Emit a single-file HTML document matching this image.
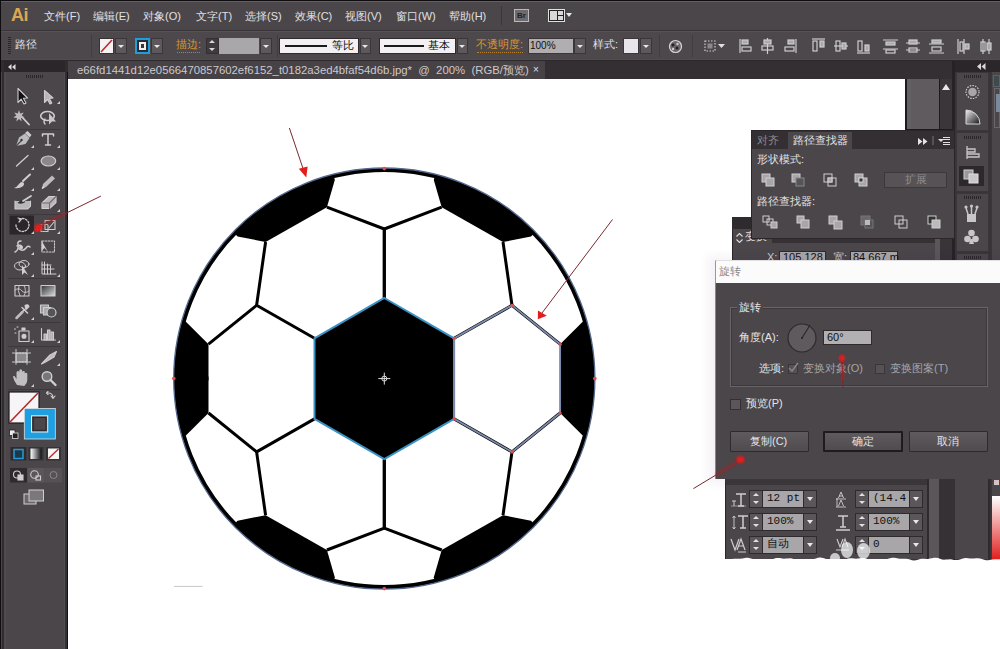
<!DOCTYPE html>
<html><head><meta charset="utf-8">
<style>
*{margin:0;padding:0;box-sizing:border-box}
html,body{width:1000px;height:649px;overflow:hidden;background:#2c282c;font-family:"Liberation Sans",sans-serif;font-size:12px;color:#dcdadc}
.a{position:absolute}
.t{position:absolute;white-space:nowrap;line-height:1}
</style></head><body>
<!-- menu bar -->
<div class="a" style="left:0;top:0;width:1000px;height:649px;background:#100d11"></div>
<div class="a" style="left:1px;top:1px;width:999px;height:1px;background:#635f63"></div>
<div class="a" style="left:1px;top:2px;width:999px;height:28px;background:#4a464a"></div>
<div class="a" style="left:1px;top:30px;width:999px;height:1px;background:#383438"></div>
<!-- control bar -->
<div class="a" style="left:1px;top:31px;width:999px;height:1px;background:#565256"></div>
<div class="a" style="left:1px;top:32px;width:999px;height:27px;background:#4c484c"></div>
<div class="a" style="left:1px;top:59px;width:999px;height:1px;background:#514d51"></div>
<div class="a" style="left:1px;top:60px;width:999px;height:1px;background:#2c282c"></div>
<!-- tab bar -->
<div class="a" style="left:1px;top:61px;width:999px;height:18px;background:#332f33"></div>
<!-- left toolbar -->
<div class="a" style="left:1px;top:61px;width:67px;height:588px;background:#302c30"></div>
<div class="a" style="left:1px;top:72px;width:1px;height:577px;background:#4a474a"></div>
<div class="a" style="left:4px;top:61px;width:61px;height:11px;background:#2a262a"></div>
<div class="a" style="left:4px;top:72px;width:61px;height:577px;background:#4a464a;border-left:2px solid #4f4b4f;border-right:1px solid #504c50"></div>
<div class="a" style="left:65px;top:72px;width:2px;height:577px;background:#333033"></div>
<div class="a" style="left:67px;top:72px;width:1px;height:577px;background:#151215"></div>
<!-- canvas -->
<div class="a" style="left:68px;top:79px;width:837px;height:570px;background:#fff"></div>
<!-- doc tab -->
<div class="a" style="left:68px;top:61px;width:477px;height:18px;background:#464246"></div>

<!-- MENU TEXT -->
<div class="t" style="left:11px;top:6px;font-size:18px;font-weight:bold;color:#dca752;letter-spacing:-0.5px">Ai</div>
<div class="t" style="left:44px;top:11px;font-size:11px;color:#e2e0e2">文件(F)</div>
<div class="t" style="left:93px;top:11px;font-size:11px;color:#e2e0e2">编辑(E)</div>
<div class="t" style="left:143px;top:11px;font-size:11px;color:#e2e0e2">对象(O)</div>
<div class="t" style="left:196px;top:11px;font-size:11px;color:#e2e0e2">文字(T)</div>
<div class="t" style="left:245px;top:11px;font-size:11px;color:#e2e0e2">选择(S)</div>
<div class="t" style="left:295px;top:11px;font-size:11px;color:#e2e0e2">效果(C)</div>
<div class="t" style="left:345px;top:11px;font-size:11px;color:#e2e0e2">视图(V)</div>
<div class="t" style="left:396px;top:11px;font-size:11px;color:#e2e0e2">窗口(W)</div>
<div class="t" style="left:449px;top:11px;font-size:11px;color:#e2e0e2">帮助(H)</div>
<div class="a" style="left:501px;top:6px;width:1px;height:19px;background:#3a363a"></div>
<div class="a" style="left:514px;top:9px;width:15px;height:13px;background:#6e6a6e;border:1px solid #bcb8bc"></div>
<div class="t" style="left:517px;top:12px;font-size:8px;font-weight:bold;color:#222">Br</div>
<div class="a" style="left:548px;top:9px;width:17px;height:13px;border:1px solid #e0e0e0;background:#222"></div>
<div class="a" style="left:550px;top:11px;width:7px;height:9px;background:#d8d8d8"></div>
<div class="a" style="left:558px;top:11px;width:5px;height:4px;background:#d8d8d8"></div>
<div class="a" style="left:558px;top:16px;width:5px;height:4px;background:#d8d8d8"></div>
<div class="a" style="left:566px;top:13px;width:0;height:0;border-left:3.5px solid transparent;border-right:3.5px solid transparent;border-top:4.5px solid #e8e8e8"></div>

<!-- CONTROL BAR -->
<div class="a" style="left:8px;top:37px;width:3px;height:18px;background:repeating-linear-gradient(#2a262a 0 1px,#4c484c 1px 2px)"></div>
<div class="t" style="left:15px;top:39px;font-size:11px;color:#e2e0e2">路径</div>
<div class="a" style="left:91px;top:35px;width:1px;height:22px;background:#403c40"></div>
<div class="a" style="left:99px;top:38px;width:15px;height:16px;background:#f4f2f4;border:1px solid #353135"></div>
<svg class="a" style="left:99px;top:38px" width="15" height="16"><line x1="2" y1="14" x2="13" y2="2" stroke="#c02828" stroke-width="1.6"/></svg>
<div class="a" style="left:115px;top:38px;width:12px;height:16px;background:#5c585c;border:1px solid #3a363a"></div>
<div class="a" style="left:118px;top:45px;width:0;height:0;border-left:3px solid transparent;border-right:3px solid transparent;border-top:3.5px solid #e8e8e8"></div>
<div class="a" style="left:135px;top:38px;width:15px;height:16px;background:#1e9fdc"></div>
<div class="a" style="left:137px;top:40px;width:11px;height:12px;background:#2e2a2e"></div>
<div class="a" style="left:139px;top:42px;width:7px;height:8px;background:#f0f0f0"></div>
<div class="a" style="left:141px;top:44px;width:3px;height:4px;background:#3a363a"></div>
<div class="a" style="left:151px;top:38px;width:12px;height:16px;background:#5c585c;border:1px solid #3a363a"></div>
<div class="a" style="left:154px;top:45px;width:0;height:0;border-left:3px solid transparent;border-right:3px solid transparent;border-top:3.5px solid #e8e8e8"></div>
<div class="t" style="left:176px;top:39px;font-size:11px;color:#d8972f">描边:</div>
<div class="a" style="left:177px;top:52px;width:23px;height:1px;border-top:1px dotted #b8802a"></div>
<div class="a" style="left:206px;top:38px;width:13px;height:16px;background:#3e3a3e;border:1px solid #332f33"></div>
<div class="a" style="left:209px;top:40px;width:0;height:0;border-left:3px solid transparent;border-right:3px solid transparent;border-bottom:3.5px solid #d8d8d8"></div>
<div class="a" style="left:209px;top:48px;width:0;height:0;border-left:3px solid transparent;border-right:3px solid transparent;border-top:3.5px solid #d8d8d8"></div>
<div class="a" style="left:219px;top:38px;width:40px;height:16px;background:#a9a7a9"></div>
<div class="a" style="left:260px;top:38px;width:12px;height:16px;background:#5c585c;border:1px solid #3a363a"></div>
<div class="a" style="left:263px;top:45px;width:0;height:0;border-left:3px solid transparent;border-right:3px solid transparent;border-top:3.5px solid #e8e8e8"></div>
<div class="a" style="left:277px;top:35px;width:1px;height:22px;background:#403c40"></div>
<div class="a" style="left:279px;top:38px;width:80px;height:16px;background:#f2f0f2;border:1px solid #2e2a2e"></div>
<div class="a" style="left:285px;top:45px;width:42px;height:2px;background:#1a1a1a"></div>
<div class="t" style="left:332px;top:40px;font-size:11px;color:#111">等比</div>
<div class="a" style="left:360px;top:38px;width:11px;height:16px;background:#5c585c;border:1px solid #3a363a"></div>
<div class="a" style="left:362px;top:45px;width:0;height:0;border-left:3px solid transparent;border-right:3px solid transparent;border-top:3.5px solid #e8e8e8"></div>
<div class="a" style="left:379px;top:38px;width:77px;height:16px;background:#f2f0f2;border:1px solid #2e2a2e"></div>
<div class="a" style="left:384px;top:45px;width:40px;height:2px;background:#1a1a1a"></div>
<div class="t" style="left:428px;top:40px;font-size:11px;color:#111">基本</div>
<div class="a" style="left:457px;top:38px;width:11px;height:16px;background:#5c585c;border:1px solid #3a363a"></div>
<div class="a" style="left:459px;top:45px;width:0;height:0;border-left:3px solid transparent;border-right:3px solid transparent;border-top:3.5px solid #e8e8e8"></div>
<div class="t" style="left:476px;top:39px;font-size:11px;color:#d8972f">不透明度:</div>
<div class="a" style="left:477px;top:52px;width:46px;height:1px;border-top:1px dotted #b8802a"></div>
<div class="a" style="left:528px;top:38px;width:46px;height:16px;background:#b0aeb0;border:1px solid #3a363a"></div>
<div class="t" style="left:530px;top:41px;font-size:10px;color:#111">100%</div>
<div class="a" style="left:574px;top:38px;width:12px;height:16px;background:#5c585c;border:1px solid #3a363a"></div>
<div class="a" style="left:577px;top:45px;width:0;height:0;border-left:3px solid transparent;border-right:3px solid transparent;border-top:3.5px solid #e8e8e8"></div>
<div class="t" style="left:593px;top:39px;font-size:11px;color:#e2e0e2">样式:</div>
<div class="a" style="left:623px;top:38px;width:16px;height:16px;background:#e9e5ec;border:1px solid #3a363a"></div>
<div class="a" style="left:640px;top:38px;width:12px;height:16px;background:#5c585c;border:1px solid #3a363a"></div>
<div class="a" style="left:643px;top:45px;width:0;height:0;border-left:3px solid transparent;border-right:3px solid transparent;border-top:3.5px solid #e8e8e8"></div>
<div class="a" style="left:659px;top:35px;width:1px;height:22px;background:#403c40"></div>
<svg class="a" style="left:668px;top:39px" width="15" height="15"><circle cx="7.5" cy="7.5" r="6" fill="#6a666a" stroke="#d8d8d8" stroke-width="1.2"/><circle cx="5" cy="6" r="1.5" fill="#222"/><circle cx="9" cy="9" r="1.5" fill="#222"/><circle cx="9.5" cy="5" r="1.2" fill="#ccc"/><circle cx="5" cy="10" r="1.2" fill="#ccc"/></svg>
<div class="a" style="left:692px;top:35px;width:1px;height:22px;background:#403c40"></div>
<svg class="a" style="left:700px;top:36px" width="300" height="22" fill="none" stroke="#cfcdcf" stroke-width="1.2">
<rect x="5" y="5" width="10" height="10" stroke-dasharray="1.5 1.5"/><rect x="7.5" y="7.5" width="5" height="5" fill="#8a888a" stroke="none"/>
<path d="M18,8 h7 l-3.5,4z" fill="#e0e0e0" stroke="none"/>
<path d="M40,3 v14"/><rect x="42" y="4" width="6" height="4" fill="#aaa"/><rect x="42" y="11" width="9" height="4"/>
<path d="M67.5,2 v16"/><rect x="64" y="4" width="7" height="4" fill="#aaa"/><rect x="62" y="10" width="11" height="4"/>
<path d="M96,3 v14"/><rect x="88" y="4" width="6" height="4" fill="#aaa"/><rect x="85" y="11" width="9" height="4"/>
<path d="M112,3 h13"/><rect x="113" y="5" width="4" height="10"/><rect x="120" y="5" width="4" height="6" fill="#aaa"/>
<path d="M134,10 h14"/><rect x="136" y="5" width="4" height="10"/><rect x="142" y="7" width="4" height="6" fill="#aaa"/>
<path d="M157,17 h13"/><rect x="158" y="5" width="4" height="10"/><rect x="165" y="9" width="4" height="6" fill="#aaa"/>
<path d="M183,4 h15 M183,13 h15"/><rect x="186" y="6" width="9" height="3" fill="#aaa"/><rect x="186" y="14" width="9" height="3"/>
<path d="M206,7 h14 M206,14 h14"/><rect x="209" y="4" width="8" height="4" fill="#aaa"/><rect x="209" y="12" width="8" height="4"/>
<path d="M229,8 h15 M229,17 h15"/><rect x="232" y="4" width="9" height="3" fill="#aaa"/><rect x="232" y="11" width="9" height="4"/>
<path d="M258,3 v15 M264,3 v15"/><rect x="260" y="6" width="3" height="9"/><rect x="265" y="8" width="4" height="5" fill="#aaa"/>
<path d="M283,3 v15 M289,3 v15"/><rect x="281" y="6" width="4" height="9"/><rect x="287" y="7" width="4" height="7" fill="#aaa"/>
</svg>


<!-- TOOLBAR -->
<svg class="a" style="left:0;top:0" width="70" height="649" viewBox="0 0 70 649">
<g fill="#3c383c"><rect x="8" y="129" width="53" height="1"/><rect x="8" y="214" width="53" height="1"/><rect x="8" y="278" width="53" height="1"/><rect x="8" y="322" width="53" height="1"/><rect x="8" y="346" width="53" height="1"/><rect x="8" y="389" width="53" height="1"/></g>
<rect x="9.5" y="215.5" width="24.5" height="19" fill="#2a262a"/>
<!-- flyout triangles -->
<g fill="#d0ced0">
<path d="M60,101 v3 h-3z"/><path d="M34,145 v3 h-3z"/><path d="M60,145 v3 h-3z"/><path d="M34,167 v3 h-3z"/><path d="M60,167 v3 h-3z"/>
<path d="M34,188 v3 h-3z"/><path d="M60,188 v3 h-3z"/><path d="M60,209 v3 h-3z"/><path d="M34,231 v3 h-3z"/><path d="M60,231 v3 h-3z"/>
<path d="M34,252 v3 h-3z"/><path d="M34,274 v3 h-3z"/><path d="M60,274 v3 h-3z"/><path d="M34,317 v3 h-3z"/><path d="M34,340 v3 h-3z"/><path d="M60,340 v3 h-3z"/>
<path d="M60,363 v3 h-3z"/><path d="M34,384 v3 h-3z"/>
</g>
<g stroke="#cfcdcf" fill="none" stroke-width="1.1" stroke-linejoin="round" stroke-linecap="round">
<!-- selection -->
<path d="M18,88.5 L18,102.5 L21.2,99.2 L24,104 L26,103 L23.4,98.3 L27.5,98 Z" fill="#111"/>
<path d="M44.5,90.5 L44.5,102.5 L47.5,99.5 L50,104 L51.8,103 L49.3,98.5 L53,98 Z" fill="#b8b6b8"/>
<!-- magic wand -->
<path d="M21,116 L29,124.5" stroke-width="1.8"/>
<path d="M19,110 l1.2,3.5 3.5,-1 -2,3 3,2 -3.6,0.5 0.5,3.6 -2.6,-2.6 -2.6,2.6 0.5,-3.6 -3.6,-0.5 3,-2 -2,-3 3.5,1z" fill="#bdbbbd" stroke="none"/>
<!-- lasso -->
<ellipse cx="47.5" cy="116" rx="6.8" ry="4.5" stroke-width="1.6"/><path d="M45,119 q-2,3 0,5" stroke-width="1.4"/>
<path d="M49,113 L49,124.5 L52,121.5 L56,121.5 Z" fill="#c8c6c8" stroke="none"/>
<!-- pen -->
<path d="M16,146 L19,137.5 L25,133.5 L29.5,138 L25.5,144 Z" fill="#bdbbbd" stroke="none"/>
<path d="M25,133 L27.5,131 L31.5,135 L29.5,137.5Z" fill="#cfcdcf" stroke="none"/>
<circle cx="21.5" cy="140" r="1.2" fill="#333" stroke="none"/><path d="M16,146 L21,141" stroke="#444"/>
<!-- type -->
<path d="M42.5,134 H53.5 V136 M42.5,134 V136 M48,134 V145 M45.5,145 H50.5" stroke-width="1.5"/>
<!-- line -->
<path d="M16.5,166 L28,155.5" stroke-width="1.3"/>
<!-- ellipse -->
<ellipse cx="48.4" cy="161" rx="7.3" ry="5" fill="#8a888a" stroke-width="1.2"/>
<!-- brush -->
<path d="M23,181 L30,174.5" stroke-width="2"/>
<path d="M14,188 q3,-1 5,-4 q2,-3 4.5,-1.5 q1.5,2 -1,4 q-3,2.5 -8.5,1.5z" fill="#cfcdcf" stroke="none"/>
<!-- pencil -->
<path d="M42,188.5 L43,184 L52,175.5 L55,178.5 L46,187 Z" fill="#bdbbbd" stroke="none"/><path d="M41.5,189.3 l1.5,-3 1.5,1.5z" fill="#eee" stroke="none"/>
<!-- blob brush -->
<path d="M15,201 v8 h12.5 l3,-3 v-5" fill="#b8b6b8" stroke="#cfcdcf"/><path d="M17.5,203 q4,-5 8,-1 q-4,3 -8,1z" fill="#333" stroke="none"/><path d="M23,201 L31,196" stroke-width="1.8"/>
<!-- eraser -->
<path d="M42,203 L49,196.5 L56,196.5 L56,202.5 L49.5,208.5 L42,208.5 Z" fill="#b8b6b8" stroke="#d2d0d2"/><path d="M42,203 H49.5 L56,196.5 M49.5,203 V208.5" stroke="#706c70"/>
<!-- rotate -->
<path d="M16,225 a6.5,6.5 0 1 0 3,-5.5" stroke-dasharray="1.6 1.6" stroke-width="1.3"/><path d="M18,218 l3.5,1 -2.5,3" stroke-width="1.2"/>
<!-- scale -->
<rect x="41" y="224.5" width="7" height="7" stroke-dasharray="1.5 1"/><rect x="45" y="220.5" width="10" height="9"/><path d="M49,228 l5,-6" />
<!-- warp -->
<path d="M15,252 q4,-2 3,-7 q-1,-4 3,-4 M19,249 q4,3 7,-1 q2,-3 4,-1 M17,246 q4,-2 5,1" stroke-width="1.5"/><circle cx="21" cy="247.5" r="1.4" fill="#cfcdcf"/>
<!-- free transform -->
<rect x="42" y="241" width="12.5" height="11" stroke-dasharray="1.6 1.4"/><path d="M41.5,240.5 L41.5,251 L44.5,248 L48,252 Z" fill="#d0ced0" stroke="none"/>
<!-- shape builder -->
<ellipse cx="20" cy="266" rx="5.5" ry="4" stroke-width="1"/><ellipse cx="24" cy="264" rx="5" ry="3.5" stroke-width="1"/><path d="M22,265 L22,275 L24.5,272.5 L28,275 Z" fill="#cfcdcf" stroke="none"/>
<!-- perspective grid -->
<path d="M42,262 V274 H56 M44.5,262 V274 M47.5,264 V274 M50.5,266 V274 M42,265 H51 M42,269 H54" stroke-width="1"/>
<!-- mesh -->
<rect x="15" y="285.5" width="14" height="10.5"/><path d="M15,290 q4,-3 7,1 q3,3 7,0 M19,285.5 q-2,5 1,10.5 M24,285.5 q3,5 0,10.5" stroke-width="0.9"/>
<!-- gradient -->
<defs><linearGradient id="gr" x1="0" x2="1" y1="0" y2="1"><stop offset="0" stop-color="#333"/><stop offset="1" stop-color="#ddd"/></linearGradient>
<linearGradient id="gw" x1="0" x2="1"><stop offset="0" stop-color="#fff"/><stop offset="1" stop-color="#111"/></linearGradient></defs>
<rect x="41" y="285.5" width="14" height="10.5" fill="url(#gr)" stroke="#cfcdcf"/>
<!-- eyedropper -->
<path d="M16.5,318 L24.5,309.5 M22,307.5 L27.5,313" stroke-width="1.5"/><path d="M25,305.5 q3,-2 4,1 l-3,3z" fill="#cfcdcf"/><path d="M16.5,318 L19,315.5 L22.5,312" stroke-width="2.5" stroke="#bdbbbd"/>
<!-- blend -->
<rect x="40.5" y="305" width="8" height="8" fill="#999"/><rect x="43.5" y="307.5" width="7.5" height="7.5" fill="#aaa"/><circle cx="51.5" cy="312.5" r="4.5" fill="#555" stroke-width="1.2"/>
<!-- symbol sprayer -->
<rect x="19" y="331" width="10" height="10.5"/><circle cx="24" cy="336.3" r="2" fill="#cfcdcf"/><rect x="22" y="328" width="3" height="2" fill="#cfcdcf"/><path d="M14.5,329 h2 M15,333 h2 M17,327 h1" stroke-dasharray="1 1"/>
<!-- column graph -->
<path d="M41.5,328.5 V340 H55.5" /><rect x="44" y="334" width="2.5" height="6" fill="#aaa"/><rect x="47.5" y="330" width="2.5" height="10" fill="#aaa"/><rect x="51" y="332" width="2.5" height="8" fill="#aaa"/>
<!-- artboard -->
<rect x="16" y="353" width="11" height="9" fill="#8a888a"/><path d="M12.5,353 H31 M12.5,362 H31 M16,349.5 V365.5 M27,349.5 V365.5" stroke-width="1" stroke-dasharray="2 1.2"/>
<!-- slice -->
<path d="M41.5,364 L50,355 L56.5,351.5 L54,357 L45.5,362 Z" fill="#bdbbbd"/>
<!-- hand -->
<path d="M17,385 q-3,-4 -4,-8 q0,-1.5 1.5,-1 l2,3 v-6.5 q0,-1.5 1.5,-1.5 q1.3,0 1.3,1.5 v-1.8 q0,-1.5 1.4,-1.5 q1.4,0 1.4,1.5 v1.5 q0,-1.3 1.4,-1.3 q1.3,0 1.3,1.3 v1.5 q0,-1 1.2,-1 q1.3,0 1.3,1.3 v6 q0,3.5 -3,6 z" fill="#c0bec0" stroke="none"/>
<!-- zoom -->
<circle cx="47" cy="376.5" r="4.8" stroke-width="1.4" fill="#777"/><path d="M50.5,380 L55.5,385" stroke-width="2.4"/>
<!-- swap -->
<path d="M48,393 q5,0 5,5 M51,396 l2,2.5 2,-2.5 M48,391.5 l-1.5,1.5 1.5,1.5" stroke-width="1.1"/>
</g>
<!-- fill/stroke swatches -->
<rect x="9" y="392" width="30" height="31" fill="#f6f4f6" stroke="#1e1c1e" stroke-width="1.2"/>
<path d="M10,422 L38,393" stroke="#b02a2a" stroke-width="1.6"/>
<rect x="24.3" y="408.5" width="31" height="30.5" fill="#1d9fe1" stroke="#e0e0e0" stroke-width="0.8"/>
<rect x="31.5" y="415.8" width="16.2" height="16.2" fill="#4a464a" stroke="#f0f0f0" stroke-width="1"/>
<rect x="33.2" y="417.5" width="12.8" height="12.8" fill="#4a464a" stroke="#2a262a" stroke-width="1"/>
<rect x="9.5" y="430" width="5.5" height="5.5" fill="#f0f0f0" stroke="#222" stroke-width="0.8"/><rect x="12.5" y="433" width="5.5" height="5.5" fill="#222" stroke="#ddd" stroke-width="0.8"/>
<!-- color modes -->
<rect x="10.5" y="447" width="16" height="13.5" fill="#2e2a2e"/>
<rect x="14" y="449.5" width="9" height="9" fill="#1a3a4a" stroke="#2a9ad6" stroke-width="1.5"/>
<rect x="28.5" y="447" width="15" height="13.5" fill="#333"/><rect x="30.5" y="448.5" width="11" height="10.5" fill="url(#gw)"/>
<rect x="46" y="447" width="15" height="13.5" fill="#333"/><rect x="48" y="448.5" width="11" height="10.5" fill="#f4f4f4"/><path d="M48.5,458.5 L58.5,449" stroke="#b02a2a" stroke-width="1.3"/>
<!-- draw modes -->
<rect x="10" y="468" width="17" height="14.5" fill="#2e2a2e"/>
<rect x="27.5" y="468" width="17" height="14.5" fill="#5a565a"/>
<rect x="45" y="468" width="17" height="14.5" fill="#555155"/>
<g fill="none" stroke="#d0ced0" stroke-width="1.1"><circle cx="17" cy="474.5" r="3.5"/><rect x="18" y="475" width="5" height="5" fill="#d0ced0"/>
<circle cx="34.5" cy="474.5" r="3.8"/><rect x="36" y="476" width="4.5" height="4" /></g>
<circle cx="53.5" cy="475" r="3.5" fill="none" stroke="#888" stroke-width="1"/>
<!-- screen mode -->
<rect x="24" y="494" width="12" height="10" fill="#6a666a" stroke="#d0ced0" stroke-width="1"/>
<rect x="29" y="490" width="14.5" height="11" fill="#7a787a" stroke="#d0ced0" stroke-width="1"/>
</svg>


<!-- RIGHT AREA -->
<div class="a" style="left:905px;top:61px;width:95px;height:500px;background:#383438"></div>
<div class="a" style="left:905px;top:61px;width:50px;height:18px;background:#332f33"></div>
<div class="a" style="left:905px;top:79px;width:50px;height:52px;background:#1e1a1e"></div>
<div class="a" style="left:907px;top:79px;width:32px;height:50px;background:#5f5b5f;border-left:4px solid #646064"></div>
<div class="a" style="left:940px;top:79px;width:12px;height:50px;background:#3a363a"></div>
<div class="a" style="left:952px;top:61px;width:3px;height:500px;background:#262226"></div>
<div class="a" style="left:942px;top:84px;width:0;height:0;border-left:4.5px solid transparent;border-right:4.5px solid transparent;border-bottom:6px solid #e8e8e8"></div>
<!-- dock -->
<div class="a" style="left:955px;top:61px;width:35px;height:11px;background:#2a262a"></div>
<svg class="a" style="left:977px;top:63px" width="9" height="7"><path d="M4,0 L0,3.5 L4,7Z M8.5,0 L4.5,3.5 L8.5,7Z" fill="#d8d8d8"/></svg>
<div class="a" style="left:956px;top:72px;width:33px;height:59px;background:#4a464a;border:1px solid #3a363a"></div>
<div class="a" style="left:964px;top:75px;width:17px;height:3px;background:repeating-linear-gradient(90deg,#2a262a 0 1px,#4a464a 1px 2px)"></div>
<svg class="a" style="left:955px;top:72px" width="35" height="490" viewBox="955 72 35 490">
<circle cx="972.5" cy="92" r="6.5" fill="none" stroke="#d0ced0" stroke-width="1.2" stroke-dasharray="1.5 1.2"/><circle cx="972.5" cy="92" r="4.3" fill="#a8a6a8"/>
<defs><linearGradient id="qg" x1="0" y1="0" x2="1" y2="1"><stop offset="0" stop-color="#f0f0f0"/><stop offset="1" stop-color="#111"/></linearGradient></defs>
<path d="M966,124 V110 A14,14 0 0 1 980,124 Z" fill="url(#qg)" stroke="#d8d6d8" stroke-width="1"/>
</svg>
<div class="a" style="left:956px;top:132px;width:33px;height:60px;background:#4a464a;border:1px solid #3a363a"></div>
<div class="a" style="left:964px;top:136px;width:17px;height:3px;background:repeating-linear-gradient(90deg,#2a262a 0 1px,#4a464a 1px 2px)"></div>
<div class="a" style="left:959px;top:166px;width:25px;height:20px;background:#2c282c"></div>
<div class="a" style="left:956px;top:193px;width:33px;height:59px;background:#4a464a;border:1px solid #3a363a"></div>
<div class="a" style="left:964px;top:196px;width:17px;height:3px;background:repeating-linear-gradient(90deg,#2a262a 0 1px,#4a464a 1px 2px)"></div>
<div class="a" style="left:956px;top:253px;width:33px;height:306px;background:#4a464a;border:1px solid #3a363a"></div>
<div class="a" style="left:964px;top:256px;width:17px;height:3px;background:repeating-linear-gradient(90deg,#2a262a 0 1px,#4a464a 1px 2px)"></div>
<svg class="a" style="left:955px;top:132px" width="35" height="130" viewBox="955 132 35 130" fill="#c8c6c8">
<path d="M967,146 V159 M967,149 H975 V152 H967 M967,154 H979 V157 H967" fill="none" stroke="#c8c6c8" stroke-width="1.3"/>
<rect x="964" y="170" width="9" height="9" fill="#9a989a" stroke="#d0ced0"/><rect x="969" y="174" width="9" height="9" fill="#c8c6c8" stroke="#e0e0e0"/>
<rect x="967" y="214" width="9" height="8"/><path d="M968,214 l-2,-6 M971.5,214 v-7 M975,214 l2,-6" stroke="#c8c6c8" stroke-width="1.5"/><circle cx="966" cy="207" r="1.6"/><circle cx="977" cy="207" r="1.6"/><circle cx="971.5" cy="206" r="1.6"/>
<circle cx="971.5" cy="233" r="3.3"/><circle cx="967.5" cy="239" r="3.3"/><circle cx="975.5" cy="239" r="3.3"/><path d="M970.5,239 L969,244 H974 L972.5,239Z"/>
</svg>
<!-- far right column -->
<div class="a" style="left:990px;top:61px;width:10px;height:11px;background:#2a262a"></div>
<div class="a" style="left:991px;top:72px;width:9px;height:487px;background:#4a464a;border-left:1px solid #3a363a"></div>
<div class="a" style="left:993px;top:75px;width:7px;height:12px;background:#3e4a4e;border:1px solid #5a6266"></div>
<div class="a" style="left:994px;top:88px;width:6px;height:40px;border:1px solid #6a666a;background:#4a464a"></div><div class="a" style="left:996px;top:94px;width:4px;height:18px;background:#7a8a9a"></div>
<div class="a" style="left:992px;top:496px;width:8px;height:63px;background:linear-gradient(#fff,#e02020)"></div>
<div class="a" style="left:993px;top:479px;width:7px;height:7px;background:#d8c8c8;border:1px solid #b02020"></div>

<!-- TRANSFORM PANEL -->
<div class="a" style="left:732px;top:217px;width:208px;height:45px;background:#4a464a;border-left:1px solid #2a262a"></div>
<div class="a" style="left:732px;top:217px;width:208px;height:12px;background:#2e2a2e"></div>
<div class="a" style="left:772px;top:238px;width:163px;height:5px;background:#353135"></div>
<div class="a" style="left:935px;top:229px;width:5px;height:33px;background:#5a565a"></div>
<svg class="a" style="left:736px;top:233px" width="7" height="10"><path d="M0.5,3.5 L3.5,0.5 L6.5,3.5 M0.5,6.5 L3.5,9.5 L6.5,6.5" fill="none" stroke="#e0dee0" stroke-width="1.1"/></svg><div class="t" style="left:745px;top:231px;font-size:11px;color:#e0dee0">变换</div>
<div class="t" style="left:767px;top:252px;font-size:11px;color:#d0ced0">X:</div>
<div class="a" style="left:779px;top:251px;width:47px;height:12px;background:#a8a6a8;border:1px solid #2e2a2e"></div>
<div class="t" style="left:783px;top:252px;font-size:11px;color:#111">105.128</div>
<div class="t" style="left:833px;top:252px;font-size:11px;color:#d0ced0">宽:</div>
<div class="a" style="left:850px;top:251px;width:48px;height:12px;background:#a8a6a8;border:1px solid #2e2a2e"></div>
<div class="t" style="left:853px;top:252px;font-size:11px;color:#111">84.667 m</div>

<!-- PATHFINDER PANEL -->
<div class="a" style="left:751px;top:130px;width:204px;height:109px;background:#4a464a;border:1px solid #2a262a"></div>
<div class="a" style="left:752px;top:131px;width:202px;height:18px;background:#332f33"></div>
<div class="a" style="left:788px;top:132px;width:64px;height:17px;background:#4a464a"></div>
<div class="t" style="left:757px;top:135px;font-size:11px;color:#8e8c8e">对齐</div>
<div class="t" style="left:793px;top:135px;font-size:11px;color:#e2e0e2">路径查找器</div>
<svg class="a" style="left:918px;top:138px" width="10" height="7"><path d="M0,0 L4.5,3.5 L0,7Z M5,0 L9.5,3.5 L5,7Z" fill="#e4e4e4"/></svg>
<div class="a" style="left:932px;top:136px;width:2px;height:9px;background:#555155"></div>
<div class="a" style="left:938px;top:139px;width:0;height:0;border-left:3px solid transparent;border-right:3px solid transparent;border-top:3px solid #e0e0e0"></div>
<div class="a" style="left:943px;top:137px;width:7px;height:8px;background:repeating-linear-gradient(#e0e0e0 0 1px,transparent 1px 2.5px)"></div>
<div class="t" style="left:757px;top:154px;font-size:11px;color:#e2e0e2">形状模式:</div>
<div class="t" style="left:757px;top:196px;font-size:11px;color:#e2e0e2">路径查找器:</div>
<div class="a" style="left:884px;top:172px;width:63px;height:16px;background:#565256;border:1px solid #3c383c"></div>
<div class="t" style="left:905px;top:174px;font-size:11px;color:#8e8c8e">扩展</div>
<svg class="a" style="left:751px;top:165px" width="204" height="70" viewBox="751 165 204 70">
<g stroke="#d0ced0" stroke-width="1" fill="#a8a6a8">
<rect x="762" y="174" width="8" height="8"/><rect x="766" y="178" width="8" height="8"/>
<rect x="792" y="174" width="8" height="8"/><rect x="796" y="178" width="8" height="8" fill="#555" stroke="#888"/>
<rect x="824" y="174" width="8" height="8" fill="none"/><rect x="828" y="178" width="8" height="8" fill="none"/><rect x="828" y="178" width="4" height="4"/>
<rect x="855" y="174" width="8" height="8"/><rect x="859" y="178" width="8" height="8"/><rect x="859" y="178" width="4" height="4" fill="#333"/>
<rect x="763" y="216" width="6" height="6" fill="none"/><rect x="767" y="219" width="6" height="6" fill="none"/><rect x="771" y="222" width="6" height="6"/>
<rect x="797" y="216" width="7" height="7"/><rect x="801" y="220" width="8" height="8"/>
<rect x="829" y="216" width="8" height="8"/><rect x="834" y="221" width="8" height="8"/>
<rect x="861" y="216" width="9" height="9" fill="#6a666a" stroke="#777"/><rect x="865" y="220" width="8" height="8" fill="#555" stroke="#777"/><rect x="865" y="220" width="5" height="5" fill="#bbb" stroke="none"/>
<rect x="895" y="216" width="8" height="8" fill="none"/><rect x="899" y="220" width="8" height="8" fill="none"/>
<rect x="928" y="216" width="8" height="8" fill="#333"/><rect x="932" y="220" width="8" height="8" fill="#bbb"/>
</g></svg>


<!-- ROTATE DIALOG -->
<div class="a" style="left:708px;top:256px;width:292px;height:228px;background:rgba(60,0,60,0.05);filter:blur(4px)"></div>
<div class="a" style="left:715px;top:260px;width:285px;height:219px;background:#4a464a;border-left:1px solid #8a868a"></div>
<div class="a" style="left:715px;top:260px;width:285px;height:23px;background:#fbfbfb;border-left:1px solid #9a989a;border-top:1px solid #e0e0e0"></div>
<div class="t" style="left:719px;top:266px;font-size:11px;color:#8a888a">旋转</div>
<div class="a" style="left:730px;top:307px;width:258px;height:80px;border:1px solid #686468;box-shadow:inset 0 0 0 1px #3c383c"></div>
<div class="a" style="left:737px;top:300px;width:26px;height:14px;background:#4a464a"></div>
<div class="t" style="left:739px;top:302px;font-size:11px;color:#e6e4e6">旋转</div>
<div class="t" style="left:739px;top:332px;font-size:11px;color:#e6e4e6">角度(A):</div>
<svg class="a" style="left:786px;top:322px" width="32" height="32"><circle cx="16" cy="16" r="14" fill="#5e5a5e" stroke="#2e2a2e" stroke-width="1.2"/><line x1="16" y1="16" x2="24" y2="3" stroke="#2a262a" stroke-width="1.1"/><circle cx="16" cy="16" r="1" fill="#222"/></svg>
<div class="a" style="left:823px;top:330px;width:49px;height:15px;background:#b2b0b2;border:1px solid #2e2a2e"></div>
<div class="t" style="left:827px;top:332px;font-size:11px;color:#111">60°</div>
<div class="t" style="left:759px;top:363px;font-size:11px;color:#e6e4e6">选项:</div>
<div class="a" style="left:788px;top:364px;width:10px;height:10px;background:#555155;border:1px solid #3a363a"></div>
<svg class="a" style="left:786px;top:360px" width="14" height="14"><path d="M3,8 L6,11 L12,3" fill="none" stroke="#8a888a" stroke-width="1.4"/></svg>
<div class="t" style="left:803px;top:363px;font-size:11px;color:#a6a4a6">变换对象(O)</div>
<div class="a" style="left:875px;top:364px;width:10px;height:10px;background:#555155;border:1px solid #3a363a"></div>
<div class="t" style="left:890px;top:363px;font-size:11px;color:#a6a4a6">变换图案(T)</div>
<div class="a" style="left:730px;top:399px;width:11px;height:11px;background:#5a565a;border:1px solid #332f33"></div>
<div class="t" style="left:746px;top:398px;font-size:11px;color:#e6e4e6">预览(P)</div>
<div class="a" style="left:730px;top:431px;width:79px;height:21px;background:linear-gradient(#5e5a5e,#4f4b4f);border:1px solid #2e2a2e;border-radius:1px"></div>
<div class="t" style="left:750px;top:436px;font-size:11px;color:#e6e4e6">复制(C)</div>
<div class="a" style="left:823px;top:431px;width:80px;height:21px;background:linear-gradient(#5e5a5e,#4f4b4f);border:2px solid #1e1c1e;border-radius:1px"></div>
<div class="t" style="left:852px;top:436px;font-size:11px;color:#e6e4e6">确定</div>
<div class="a" style="left:909px;top:431px;width:79px;height:21px;background:linear-gradient(#5e5a5e,#4f4b4f);border:1px solid #2e2a2e;border-radius:1px"></div>
<div class="t" style="left:937px;top:436px;font-size:11px;color:#e6e4e6">取消</div>

<!-- CHARACTER PANEL -->
<div class="a" style="left:725px;top:479px;width:203px;height:80px;background:#4a464a;border-left:1px solid #2a262a;border-top:6px solid #3a363a"></div>
<div class="a" style="left:927px;top:479px;width:2px;height:80px;background:#2e2a2e"></div>
<div class="a" style="left:929px;top:479px;width:10px;height:80px;background:#5a565a"></div>
<div class="a" style="left:939px;top:479px;width:16px;height:80px;background:#353135"></div>
<div class="a" style="left:955px;top:479px;width:35px;height:80px;background:#4a464a;border-right:2px solid #2e2a2e"></div>
<div class="a" style="left:749px;top:490px;width:68px;height:18px;background:#2e2a2e"></div>
<div class="a" style="left:750px;top:491px;width:12px;height:16px;background:#5a565a"></div>
<div class="a" style="left:753px;top:493px;width:0;height:0;border-left:3px solid transparent;border-right:3px solid transparent;border-bottom:3.5px solid #e0e0e0"></div>
<div class="a" style="left:753px;top:501px;width:0;height:0;border-left:3px solid transparent;border-right:3px solid transparent;border-top:3.5px solid #e0e0e0"></div>
<div class="a" style="left:763px;top:491px;width:40px;height:16px;background:#a8a6a8"></div>
<div class="t" style="left:767px;top:493px;font-size:11px;color:#111;font-family:'Liberation Mono',monospace">12 pt</div>
<div class="a" style="left:804px;top:491px;width:12px;height:16px;background:#5a565a"></div>
<div class="a" style="left:807px;top:497px;width:0;height:0;border-left:3.5px solid transparent;border-right:3.5px solid transparent;border-top:4px solid #e8e8e8"></div>
<div class="a" style="left:855px;top:490px;width:68px;height:18px;background:#2e2a2e"></div>
<div class="a" style="left:856px;top:491px;width:12px;height:16px;background:#5a565a"></div>
<div class="a" style="left:859px;top:493px;width:0;height:0;border-left:3px solid transparent;border-right:3px solid transparent;border-bottom:3.5px solid #e0e0e0"></div>
<div class="a" style="left:859px;top:501px;width:0;height:0;border-left:3px solid transparent;border-right:3px solid transparent;border-top:3.5px solid #e0e0e0"></div>
<div class="a" style="left:869px;top:491px;width:40px;height:16px;background:#a8a6a8"></div>
<div class="t" style="left:873px;top:493px;font-size:11px;color:#111;font-family:'Liberation Mono',monospace">(14.4</div>
<div class="a" style="left:910px;top:491px;width:12px;height:16px;background:#5a565a"></div>
<div class="a" style="left:913px;top:497px;width:0;height:0;border-left:3.5px solid transparent;border-right:3.5px solid transparent;border-top:4px solid #e8e8e8"></div>
<div class="a" style="left:749px;top:513px;width:68px;height:18px;background:#2e2a2e"></div>
<div class="a" style="left:750px;top:514px;width:12px;height:16px;background:#5a565a"></div>
<div class="a" style="left:753px;top:516px;width:0;height:0;border-left:3px solid transparent;border-right:3px solid transparent;border-bottom:3.5px solid #e0e0e0"></div>
<div class="a" style="left:753px;top:524px;width:0;height:0;border-left:3px solid transparent;border-right:3px solid transparent;border-top:3.5px solid #e0e0e0"></div>
<div class="a" style="left:763px;top:514px;width:40px;height:16px;background:#a8a6a8"></div>
<div class="t" style="left:767px;top:516px;font-size:11px;color:#111;font-family:'Liberation Mono',monospace">100%</div>
<div class="a" style="left:804px;top:514px;width:12px;height:16px;background:#5a565a"></div>
<div class="a" style="left:807px;top:520px;width:0;height:0;border-left:3.5px solid transparent;border-right:3.5px solid transparent;border-top:4px solid #e8e8e8"></div>
<div class="a" style="left:855px;top:513px;width:68px;height:18px;background:#2e2a2e"></div>
<div class="a" style="left:856px;top:514px;width:12px;height:16px;background:#5a565a"></div>
<div class="a" style="left:859px;top:516px;width:0;height:0;border-left:3px solid transparent;border-right:3px solid transparent;border-bottom:3.5px solid #e0e0e0"></div>
<div class="a" style="left:859px;top:524px;width:0;height:0;border-left:3px solid transparent;border-right:3px solid transparent;border-top:3.5px solid #e0e0e0"></div>
<div class="a" style="left:869px;top:514px;width:40px;height:16px;background:#a8a6a8"></div>
<div class="t" style="left:873px;top:516px;font-size:11px;color:#111;font-family:'Liberation Mono',monospace">100%</div>
<div class="a" style="left:910px;top:514px;width:12px;height:16px;background:#5a565a"></div>
<div class="a" style="left:913px;top:520px;width:0;height:0;border-left:3.5px solid transparent;border-right:3.5px solid transparent;border-top:4px solid #e8e8e8"></div>
<div class="a" style="left:749px;top:536px;width:68px;height:18px;background:#2e2a2e"></div>
<div class="a" style="left:750px;top:537px;width:12px;height:16px;background:#5a565a"></div>
<div class="a" style="left:753px;top:539px;width:0;height:0;border-left:3px solid transparent;border-right:3px solid transparent;border-bottom:3.5px solid #e0e0e0"></div>
<div class="a" style="left:753px;top:547px;width:0;height:0;border-left:3px solid transparent;border-right:3px solid transparent;border-top:3.5px solid #e0e0e0"></div>
<div class="a" style="left:763px;top:537px;width:40px;height:16px;background:#a8a6a8"></div>
<div class="t" style="left:767px;top:539px;font-size:11px;color:#111;font-family:'Liberation Mono',monospace">自动</div>
<div class="a" style="left:804px;top:537px;width:12px;height:16px;background:#5a565a"></div>
<div class="a" style="left:807px;top:543px;width:0;height:0;border-left:3.5px solid transparent;border-right:3.5px solid transparent;border-top:4px solid #e8e8e8"></div>
<div class="a" style="left:855px;top:536px;width:68px;height:18px;background:#2e2a2e"></div>
<div class="a" style="left:856px;top:537px;width:12px;height:16px;background:#5a565a"></div>
<div class="a" style="left:859px;top:539px;width:0;height:0;border-left:3px solid transparent;border-right:3px solid transparent;border-bottom:3.5px solid #e0e0e0"></div>
<div class="a" style="left:859px;top:547px;width:0;height:0;border-left:3px solid transparent;border-right:3px solid transparent;border-top:3.5px solid #e0e0e0"></div>
<div class="a" style="left:869px;top:537px;width:40px;height:16px;background:#a8a6a8"></div>
<div class="t" style="left:873px;top:539px;font-size:11px;color:#111;font-family:'Liberation Mono',monospace">0</div>
<div class="a" style="left:910px;top:537px;width:12px;height:16px;background:#5a565a"></div>
<div class="a" style="left:913px;top:543px;width:0;height:0;border-left:3.5px solid transparent;border-right:3.5px solid transparent;border-top:4px solid #e8e8e8"></div>

<svg class="a" style="left:725px;top:485px" width="135" height="75" viewBox="725 485 135 75" fill="none" stroke="#cfcdcf">
<path d="M736,494 H746 M741,494 V506 M738,506 H744" stroke-width="1.5"/><path d="M732,501 H736 M734,501 V506" stroke-width="1"/><path d="M731,506 H746" stroke-width="0.6"/>
<path d="M738,516 H748 M743,516 V528 M740,528 H746" stroke-width="1.5"/><path d="M734,516 V529 M732.5,518 L734,516 735.5,518 M732.5,527 L734,529 735.5,527" stroke-width="0.9"/>
<path d="M731,539 L735,550 L739,539 M737,550 L741,539 L745,550 M738.5,546 H743.5 M738,552 H746" stroke-width="1.2"/>
<path d="M841,492 L838.5,498 M841,492 L843.5,498 M839,496 H843 M836,499 H846 M841,500 L838.5,506 M841,500 L843.5,506 M836,507 H846 M837,498 V507" stroke-width="0.9"/>
<path d="M838,516 H848 M843,516 V527 M840,527 H846 M836,530 H850" stroke-width="1.5"/>
<path d="M837,539 L840,547 L843,539 M842,547 L845,539 L848,547 M836,550 H849" stroke-width="1.1"/>
</svg>

<!-- TAB BAR -->
<svg class="a" style="left:8px;top:64px" width="8" height="6"><path d="M3.5,0 L0,3 L3.5,6Z M7.5,0 L4,3 L7.5,6Z" fill="#dcdcdc"/></svg>
<div class="a" style="left:26px;top:75px;width:17px;height:3px;background:repeating-linear-gradient(90deg,#2a262a 0 1px,#4a464a 1px 2px)"></div>
<div class="t" style="left:77px;top:65px;font-size:11.35px;color:#cdc9cd;letter-spacing:0px">e66fd1441d12e0566470857602ef6152_t0182a3ed4bfaf54d6b.jpg*&nbsp; @&nbsp; 200%&nbsp; (RGB/预览)</div>
<div class="t" style="left:533px;top:65px;font-size:10px;color:#e0e0e0">&#215;</div>

<svg class="a" style="left:0;top:0" width="1000" height="649"><polygon fill="#fff" points="700,649 700.0,558.82 702.0,558.15 704.0,557.71 706.0,557.71 708.0,558.09 710.0,558.59 712.0,558.91 714.0,558.94 716.0,558.82 718.0,558.80 720.0,559.07 722.0,559.61 724.0,560.16 726.0,560.40 728.0,560.19 730.0,559.63 732.0,559.04 734.0,558.69 736.0,558.66 738.0,558.79 740.0,558.83 742.0,558.59 744.0,558.16 746.0,557.78 748.0,557.75 750.0,558.15 752.0,558.82 754.0,559.45 756.0,559.76 758.0,559.71 760.0,559.49 762.0,559.38 764.0,559.52 766.0,559.83 768.0,560.04 770.0,559.90 772.0,559.36 774.0,558.64 776.0,558.07 778.0,557.89 780.0,558.08 782.0,558.43 784.0,558.64 786.0,558.59 788.0,558.39 790.0,558.32 792.0,558.58 794.0,559.16 796.0,559.84 798.0,560.27 800.0,560.27 802.0,559.90 804.0,559.42 806.0,559.12 808.0,559.11 810.0,559.23 812.0,559.25 814.0,558.95 816.0,558.40 818.0,557.84 820.0,557.60 822.0,557.81 824.0,558.36 826.0,558.94 828.0,559.27 830.0,559.29 832.0,559.16 834.0,559.14 836.0,559.40 838.0,559.85 840.0,560.24 842.0,560.27 844.0,559.87 846.0,559.20 848.0,558.58 850.0,558.28 852.0,558.34 854.0,558.54 856.0,558.63 858.0,558.46 860.0,558.14 862.0,557.92 864.0,558.07 866.0,558.61 868.0,559.33 870.0,559.90 872.0,560.08 874.0,559.89 876.0,559.56 878.0,559.37 880.0,559.44 882.0,559.65 884.0,559.72 886.0,559.46 888.0,558.86 890.0,558.18 892.0,557.74 894.0,557.74 896.0,558.11 898.0,558.57 900.0,558.85 902.0,558.85 904.0,558.71 906.0,558.71 908.0,559.02 910.0,559.59 912.0,560.15 914.0,560.40 916.0,560.19 918.0,559.65 920.0,559.09 922.0,558.77 924.0,558.76 926.0,558.89 928.0,558.89 930.0,558.61 932.0,558.14 934.0,557.75 936.0,557.71 938.0,558.11 940.0,558.78 942.0,559.39 944.0,559.67 946.0,559.62 948.0,559.42 950.0,559.36 952.0,559.55 954.0,559.89 956.0,560.11 958.0,559.96 960.0,559.41 962.0,558.69 964.0,558.13 966.0,557.95 968.0,558.14 970.0,558.45 972.0,558.62 974.0,558.53 976.0,558.31 978.0,558.23 980.0,558.51 982.0,559.12 984.0,559.81 986.0,560.24 988.0,560.24 990.0,559.88 992.0,559.44 994.0,559.18 996.0,559.20 998.0,559.34 1000.0,559.33 1000,649"/></svg>
<svg class="a" style="left:0;top:0" width="1000" height="649" viewBox="0 0 1000 649">
<defs>
<clipPath id="cc"><circle cx="0" cy="0" r="208"/></clipPath>
<g id="q">
<polygon points="49.5,-198.7 57.4,-171.4 118.7,-136.6 146.7,-142.1 183.4,-177.6 61.9,-248.4"/>
<polygon points="175.8,-34.4 198.9,-57.4 248.6,-71.8 260,0 260,2 175.8,2"/>
</g>
<g id="s">
<polyline points="0,-80.6 0,-149.6 57.4,-171.4"/>
<polyline points="118.7,-136.6 127.7,-73.3 69.8,-40.3"/>
<polyline points="127.7,-73.3 175.8,-34.4"/>
</g>
</defs>
<g transform="translate(384.3,378.6)">
<circle r="208" fill="#fff"/>
<g clip-path="url(#cc)" fill="#000">
<use href="#q"/><use href="#q" transform="scale(-1,1)"/><use href="#q" transform="scale(1,-1)"/><use href="#q" transform="scale(-1,-1)"/>
</g>
<g fill="none" stroke="#000" stroke-width="3" stroke-linejoin="round">
<use href="#s"/><use href="#s" transform="scale(-1,1)"/><use href="#s" transform="scale(1,-1)"/><use href="#s" transform="scale(-1,-1)"/>
</g>
<circle r="208.5" fill="none" stroke="#000" stroke-width="4"/>
<circle r="210.6" fill="none" stroke="#55698d" stroke-width="1.3"/>
<polygon points="0,-80.6 69.8,-40.3 69.8,40.3 0,80.6 -69.8,40.3 -69.8,-40.3" fill="#000" stroke="#3a92c6" stroke-width="2"/>
<polygon points="69.8,-40.3 127.7,-73.3 175.8,-34.4 175.8,34.4 127.7,73.3 69.8,40.3" fill="none" stroke="#7d89aa" stroke-width="1.9"/>
<g fill="#e05050">
<circle cx="69.8" cy="-40.3" r="1.6"/><circle cx="127.7" cy="-73.3" r="1.6"/><circle cx="175.8" cy="-34.4" r="1.6"/>
<circle cx="175.8" cy="34.4" r="1.6"/><circle cx="127.7" cy="73.3" r="1.6"/><circle cx="69.8" cy="40.3" r="1.6"/>
<circle cx="0" cy="-210" r="1.8"/><circle cx="0" cy="210" r="1.8"/><circle cx="-210.5" cy="0" r="1.8"/><circle cx="210.5" cy="0" r="1.8"/>
</g>
<g stroke="#ddd" stroke-width="1" fill="none"><circle r="2.5"/><path d="M-6,0H6M0,-6V6"/></g>
</g>
</svg>

<!-- ARROWS -->
<svg class="a" style="left:0;top:0" width="1000" height="649" viewBox="0 0 1000 649"><defs><filter id="bl" x="-50%" y="-50%" width="200%" height="200%"><feGaussianBlur stdDeviation="0.9"/></filter></defs>
<g stroke="#7a2830" stroke-width="1" fill="none">
<line x1="289.4" y1="128" x2="303.5" y2="170"/>
<line x1="100.9" y1="196.1" x2="38" y2="227"/>
<line x1="612.5" y1="219.5" x2="542" y2="313"/>
<line x1="693.4" y1="488.6" x2="740" y2="460.5"/>
<line x1="843" y1="388" x2="842" y2="360"/>
</g>
<g stroke="#c02020" stroke-width="3" stroke-opacity="0.45" filter="url(#bl)"><line x1="66" y1="213" x2="38" y2="227"/><line x1="716" y1="475" x2="740" y2="460.5"/><line x1="843" y1="380" x2="842" y2="360"/></g>
<g fill="#e51c1c">
<polygon points="306.3,177.5 298.8,168.8 307.6,166.6"/>
<polygon points="33.4,229.8 41.5,224.5 38,232.5"/>
<polygon points="537.8,319.2 538,310.5 546.8,315.8"/>
<g filter="url(#bl)"><ellipse cx="38.5" cy="227.5" rx="4" ry="3.5"/>
<ellipse cx="740.5" cy="459.5" rx="4" ry="3.6"/>
<ellipse cx="842" cy="358" rx="2.8" ry="3.5"/></g>
</g>
<line x1="174" y1="586.4" x2="202.5" y2="586.4" stroke="#c8c8c8" stroke-width="1"/>
<!-- watermark -->
<g fill="#fff" fill-opacity="0.7"><ellipse cx="847" cy="550" rx="6" ry="8"/><ellipse cx="863.5" cy="551" rx="6.5" ry="8"/><ellipse cx="835" cy="558" rx="5" ry="5"/></g>
</svg>
</body></html>
